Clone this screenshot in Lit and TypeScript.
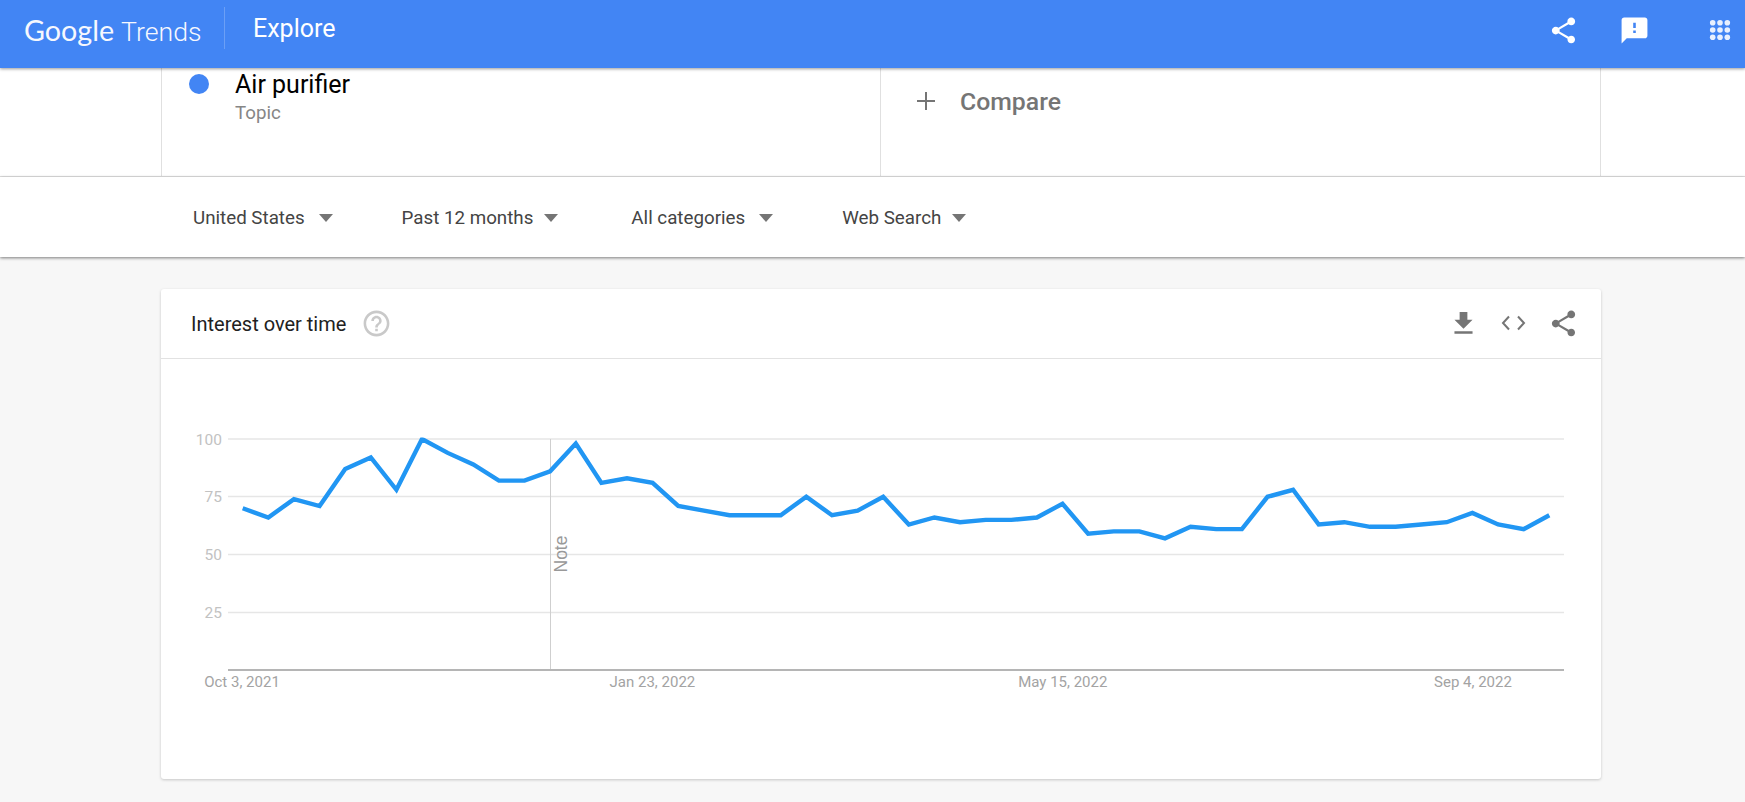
import { LitElement, html, css, svg } from "lit";
import { customElement } from "lit/decorators.js";

const SHARE = "M18 16.08c-.76 0-1.44.3-1.96.77L8.91 12.7c.05-.23.09-.46.09-.7s-.04-.47-.09-.7l7.05-4.11c.54.5 1.25.81 2.04.81 1.66 0 3-1.34 3-3s-1.34-3-3-3-3 1.34-3 3c0 .24.04.47.09.7L8.04 9.81C7.5 9.31 6.79 9 6 9c-1.66 0-3 1.34-3 3s1.34 3 3 3c.79 0 1.5-.31 2.04-.81l7.12 4.16c-.05.21-.08.43-.08.65 0 1.61 1.31 2.92 2.92 2.92 1.61 0 2.92-1.31 2.92-2.92s-1.31-2.92-2.92-2.92z";
const FEEDBACK = "M20 2H4c-1.1 0-1.99.9-1.99 2L2 22l4-4h14c1.1 0 2-.9 2-2V4c0-1.1-.9-2-2-2zm-7 12h-2v-2h2v2zm0-4h-2V6h2v4z";
const HELP = "M11 18h2v-2h-2v2zm1-16C6.48 2 2 6.48 2 12s4.48 10 10 10 10-4.48 10-10S17.52 2 12 2zm0 18c-4.41 0-8-3.59-8-8s3.59-8 8-8 8 3.59 8 8-3.59 8-8 8zm0-14c-2.21 0-4 1.79-4 4h2c0-1.1.9-2 2-2s2 .9 2 2c0 2-3 1.75-3 5h2c0-2.25 3-2.5 3-5 0-2.21-1.79-4-4-4z";
const DOWNLOAD = "M19 9h-4V3H9v6H5l7 7 7-7zM5 18v2h14v-2H5z";

const VALUES = [70,66,74,71,87,92,78,100,94,89,82,82,86,98,81,83,81,71,69,67,67,67,75,67,69,75,63,66,64,65,65,66,72,59,60,60,57,62,61,61,75,78,63,64,62,62,63,64,68,63,61,67];
const X0 = 242.7, DX = (1549.3 - 242.7) / 51, Y0 = 670, UNIT = 2.31;
const POINTS = VALUES.map((v, i) => `${(X0 + i * DX).toFixed(1)},${(Y0 - v * UNIT).toFixed(1)}`).join(" ");
const FILTERS = ["United States", "Past 12 months", "All categories", "Web Search"];
const GRID = [{ y: 439, t: "100" }, { y: 496.5, t: "75" }, { y: 554.5, t: "50" }, { y: 612.5, t: "25" }];
const DATES = [{ x: 242, t: "Oct 3, 2021" }, { x: 652.4, t: "Jan 23, 2022" }, { x: 1062.8, t: "May 15, 2022" }, { x: 1473, t: "Sep 4, 2022" }];

@customElement("app-root")
export class AppRoot extends LitElement {
  static styles = css`
    :host { display: block; height: 802px; overflow: hidden; background: #f7f7f7; font-family: Roboto, "Noto Sans", sans-serif; }
    .head { position: relative; z-index: 3; height: 68px; background: #4285f4; color: #fff; display: flex; align-items: center; box-shadow: 0 1px 3px rgba(0,0,0,.4); }
    .logo { display: flex; align-items: baseline; margin-left: 24px; width: 200px; font-size: 28.7px; line-height: 34px; margin-top: -7px; color: #f6f8fe; }
    .logo .g { font-family: Lato, Roboto, sans-serif; font-weight: 400; }
    .logo .t { font-weight: 300; margin-left: 7px; font-size: 26.7px; }
    .rule { width: 1px; height: 42px; background: rgba(255,255,255,.22); margin-top: -13px; }
    .title { font-size: 25px; margin-left: 28px; margin-top: -12px; }
    .tools { margin-left: auto; display: flex; align-items: center; margin-top: -7px; }
    .tools svg { width: 31px; height: 31px; fill: #fff; display: block; }
    .tools .b { margin-left: 40px; }
    .tools .c { margin-left: 55px; margin-right: 9px; }
    .terms-row { height: 108px; background: #fff; border-bottom: 1px solid #e2e2e2; }
    .terms { margin-left: 161px; width: 1440px; height: 108px; display: grid; grid-template-columns: 719px 721px; box-sizing: border-box; border-left: 1px solid #e0e0e0; border-right: 1px solid #e0e0e0; }
    .term { border-right: 1px solid #e0e0e0; display: flex; padding-left: 27px; }
    .dot { width: 20px; height: 20px; border-radius: 50%; background: #4285f4; margin-top: 6px; }
    .term-text { margin-left: 26px; padding-top: 2px; }
    .name { font-size: 25px; line-height: 30px; color: #000; }
    .kind { font-size: 18.7px; line-height: 22px; color: #868686; margin-top: 2px; }
    .compare { display: flex; align-items: center; padding: 18px 0 0 36px; height: 30px; font-size: 24.8px; font-weight: 500; color: #757575; }
    .compare svg { width: 18px; height: 18px; stroke: #757575; stroke-width: 2; display: block; }
    .compare span { margin-left: 25px; }
    .filters { position: relative; z-index: 2; height: 80px; padding-top: 2px; box-sizing: border-box; background: #fff; box-shadow: 0 1px 3px rgba(0,0,0,.5); display: flex; align-items: center; padding-left: 193px; }
    .f { display: flex; align-items: center; font-size: 18.75px; color: #444; }
    .f::after { content: ""; border-left: 7px solid transparent; border-right: 7px solid transparent; border-top: 8px solid #757575; margin-left: 14px; }
    .f:nth-child(2)::after, .f:nth-child(4)::after { margin-left: 11px; }
    .f:nth-child(2) { margin-left: 69px; }
    .f:nth-child(3) { margin-left: 73px; }
    .f:nth-child(4) { margin-left: 69px; }
    .card { margin: 32px 0 0 161px; width: 1440px; height: 490px; background: #fff; border-radius: 3px; box-shadow: 0 1px 3px rgba(0,0,0,.2); }
    .card-head { height: 69px; border-bottom: 1px solid #e2e2e2; display: flex; align-items: center; padding-left: 30px; padding-right: 22px; }
    .card-title { font-size: 20px; color: #212121; }
    .help { width: 31px; height: 31px; fill: #c9c9c9; margin-left: 15px; display: block; }
    .actions { margin-left: auto; display: flex; gap: 19px; }
    .actions svg { width: 31px; height: 31px; fill: #757575; display: block; }
    .actions .code { fill: none; stroke: #757575; stroke-width: 2; }
    .chart { display: block; width: 1440px; height: 420px; font-family: Roboto, sans-serif; }
    .gl { stroke: #e6e6e6; stroke-width: 1.4; }
    .yl { font-size: 15.5px; fill: #c2c2c2; text-anchor: end; }
    .xl { font-size: 15px; fill: #a3a3a3; text-anchor: middle; }
    .base { stroke: #b5b5b5; stroke-width: 2; }
    .note { stroke: #cfcfcf; stroke-width: 1; }
    .notet { font-family: "Liberation Sans", sans-serif; font-size: 17.5px; fill: #999; }
    .line { fill: none; stroke: #2196f3; stroke-width: 4.4; stroke-linejoin: miter; }
  `;

  render() {
    return html`
      <header class="head">
        <div class="logo"><span class="g">Google</span><span class="t">Trends</span></div>
        <div class="rule"></div>
        <div class="title">Explore</div>
        <div class="tools">
          <svg viewBox="0 0 24 24"><path d="${SHARE}"></path></svg>
          <svg class="b" viewBox="0 0 24 24"><path d="${FEEDBACK}"></path></svg>
          <svg class="c" viewBox="0 0 31 31" fill-opacity=".88">
            ${[7.7, 15, 22.3].map((y) => [7.7, 15, 22.3].map((x) => svg`<circle cx="${x}" cy="${y}" r="2.8"></circle>`))}
          </svg>
        </div>
      </header>
      <section class="terms-row">
        <div class="terms">
          <div class="term">
            <div class="dot"></div>
            <div class="term-text"><div class="name">Air purifier</div><div class="kind">Topic</div></div>
          </div>
          <div class="compare">
            <svg viewBox="0 0 18 18"><path d="M9 0v18M0 9h18"></path></svg>
            <span>Compare</span>
          </div>
        </div>
      </section>
      <nav class="filters">${FILTERS.map((f) => html`<div class="f">${f}</div>`)}</nav>
      <section class="card">
        <div class="card-head">
          <div class="card-title">Interest over time</div>
          <svg class="help" viewBox="0 0 24 24"><path d="${HELP}"></path></svg>
          <div class="actions">
            <svg viewBox="0 0 24 24"><path d="${DOWNLOAD}"></path></svg>
            <svg class="code" viewBox="0 0 31 31"><path d="M11 8.5l-6 6.5 6 6.5M20 8.5l6 6.5-6 6.5"></path></svg>
            <svg viewBox="0 0 24 24"><path d="${SHARE}"></path></svg>
          </div>
        </div>
        <svg class="chart" viewBox="161 359 1440 420">
          <defs><clipPath id="plot"><rect x="228" y="437.5" width="1336" height="232"></rect></clipPath></defs>
          ${GRID.map((g) => svg`<line class="gl" x1="228" x2="1564" y1="${g.y}" y2="${g.y}"></line>
            <text class="yl" x="222" y="${g.y + 5.5}">${g.t}</text>`)}
          <line class="note" x1="550.5" x2="550.5" y1="439" y2="671"></line>
          <line class="base" x1="228" x2="1564" y1="670" y2="670"></line>
          <text class="notet" transform="translate(567 572.5) rotate(-90)">Note</text>
          <polyline class="line" clip-path="url(#plot)" points="${POINTS}"></polyline>
          ${DATES.map((d) => svg`<text class="xl" x="${d.x}" y="687">${d.t}</text>`)}
        </svg>
      </section>
    `;
  }
}
